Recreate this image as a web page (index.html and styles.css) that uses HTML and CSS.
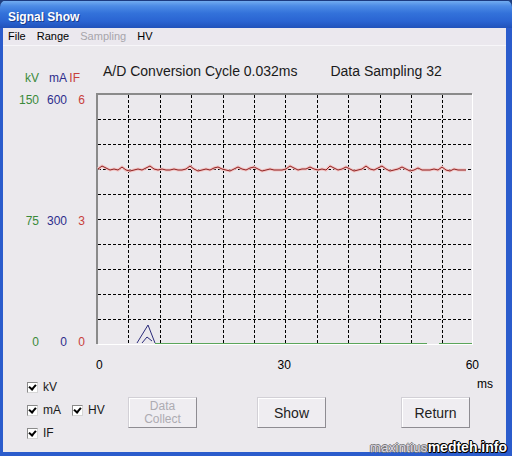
FILE: index.html
```html
<!DOCTYPE html>
<html lang="en">
<head>
  <meta charset="UTF-8" />
  <title>Signal Show</title>
  <link rel="stylesheet" href="styles.css">
</head>
<body>

  <div class="window">
    <div class="titlebar">Signal Show</div>

    <div class="frame">
      <div class="menubar">
        <span class="menu-item">File</span>
        <span class="menu-item">Range</span>
        <span class="menu-item disabled">Sampling</span>
        <span class="menu-item">HV</span>
      </div>

      <div class="client">
        <div class="legend">
          <span class="kv">kV</span>
          <span class="ma">mA</span>
          <span class="if if-head">IF</span>
        </div>

        <div class="info">
          <span>A/D Conversion Cycle 0.032ms</span>
          <span class="sampling">Data Sampling 32</span>
        </div>

        <div class="scale">
          <div class="scale-row"><span class="kv">150</span><span class="ma">600</span><span class="if">6</span></div>
          <div class="scale-row"><span class="kv">75</span><span class="ma">300</span><span class="if">3</span></div>
          <div class="scale-row"><span class="kv">0</span><span class="ma">0</span><span class="if">0</span></div>
        </div>

        <div class="chart">
          <svg width="377" height="252" viewBox="0 0 377 252">
            <g stroke="#000" stroke-width="1" stroke-dasharray="3 2" shape-rendering="crispEdges">
              <path d="M32.5 2V250 M64.5 2V250 M95.5 2V250 M127.5 2V250 M158.5 2V250 M189.5 2V250 M221.5 2V250 M252.5 2V250 M284.5 2V250 M315.5 2V250 M346.5 2V250" />
              <path d="M2 26.5H376 M2 51.5H376 M2 76.5H376 M2 101.5H376 M2 126.5H376 M2 151.5H376 M2 176.5H376 M2 201.5H376 M2 226.5H376" />
            </g>
            <!-- frame -->
            <path d="M1 251V1H376" fill="none" stroke="#8a8a8a" stroke-width="2" shape-rendering="crispEdges" />
            <path d="M376.5 1V251.5H2" fill="none" stroke="#fff" stroke-width="1" shape-rendering="crispEdges" />
            <!-- IF trace -->
            <polyline class="trace-glow" points="2,76 6,73 10,75 14,77 18,76 22,77 26,74 30,77 34,78 38,77 42,76 46,77 50,75 54,73 58,76 62,77 66,76 70,77 74,77 78,76 82,77 86,77 90,76 94,73 98,76 102,78 106,77 110,76 114,77 118,75 122,74 126,76 130,77 134,78 138,76 142,74 146,76 150,77 154,75 158,74 162,76 166,78 170,77 174,76 178,77 182,77 186,77 190,76 194,73 198,75 202,77 206,76 210,76 214,74 218,76 222,77 226,76 230,77 234,73 238,75 242,77 246,76 250,74 254,76 258,78 262,77 266,76 270,73 274,76 278,77 282,75 286,73 290,76 294,78 298,77 302,76 306,74 310,76 314,78 318,77 322,75 326,77 330,77 334,77 338,76 342,77 346,74 350,77 354,78 358,76 362,77 366,77 370,77" />
            <polyline class="trace-if" points="2,76 6,73 10,75 14,77 18,76 22,77 26,74 30,77 34,78 38,77 42,76 46,77 50,75 54,73 58,76 62,77 66,76 70,77 74,77 78,76 82,77 86,77 90,76 94,73 98,76 102,78 106,77 110,76 114,77 118,75 122,74 126,76 130,77 134,78 138,76 142,74 146,76 150,77 154,75 158,74 162,76 166,78 170,77 174,76 178,77 182,77 186,77 190,76 194,73 198,75 202,77 206,76 210,76 214,74 218,76 222,77 226,76 230,77 234,73 238,75 242,77 246,76 250,74 254,76 258,78 262,77 266,76 270,73 274,76 278,77 282,75 286,73 290,76 294,78 298,77 302,76 306,74 310,76 314,78 318,77 322,75 326,77 330,77 334,77 338,76 342,77 346,74 350,77 354,78 358,76 362,77 366,77 370,77" />
            <!-- mA spike -->
            <polyline class="trace-ma" points="41,250 52,232 59,250" />
            <polyline class="trace-ma" points="46,250 51,244 56,248" />
            <!-- kV baseline -->
            <path class="trace-kv" d="M59 250.5H331 M343 250.5H376" />
          </svg>
        </div>

        <div class="xaxis">
          <span>0</span>
          <span>30</span>
          <span>60</span>
        </div>

        <div class="controls">
          <div class="checks">
            <label class="check"><span class="box"></span>kV</label>
            <div class="check-line">
              <label class="check"><span class="box"></span>mA</label>
              <label class="check"><span class="box"></span>HV</label>
            </div>
            <label class="check"><span class="box"></span>IF</label>
          </div>
          <button class="btn btn-disabled" disabled>Data<br>Collect</button>
          <button class="btn btn-show">Show</button>
          <button class="btn btn-return">Return</button>
          <span class="unit">ms</span>
        </div>
      </div>
    </div>

    <div class="watermark"><span class="wm-name">maxintius</span><span class="wm-site">medteh.info</span></div>
  </div>

</body>
</html>
```

FILE: styles.css
```css
body {
  margin: 0;
  background: #1f3f80;
  font-family: 'Liberation Sans', Arial, sans-serif;
}

.window {
  position: relative;
  width: 512px;
  height: 456px;
  display: flex;
  flex-direction: column;
  border-radius: 7px 7px 0 0;
  overflow: hidden;
}

.titlebar {
  height: 28px;
  box-sizing: border-box;
  padding: 3px 0 0 8px;
  line-height: 26px;
  font-size: 12px;
  font-weight: bold;
  color: #fff;
  text-shadow: 1px 1px 0 #1a3c8c;
  background: linear-gradient(#72acf0 0%, #4d8ce6 18%, #3372da 45%, #2a64d2 75%, #2152ba 100%);
  border-top: 1px solid #1c3a80;
}

.frame {
  flex: 1;
  display: flex;
  flex-direction: column;
  border-left: 3px solid #2b5ccc;
  border-right: 6px solid #2b5ccc;
  border-bottom: 4px solid #2b5ccc;
  background: #ebe9ed;
}

.menubar {
  height: 17px;
  line-height: 17px;
  padding-left: 1px;
  font-size: 11px;
  color: #000;
  background: #ebe8ee;
  border-bottom: 1px solid #f7f6f9;
}

.menu-item {
  padding: 0 4px;
}

.menu-item.disabled {
  color: #a7a5ab;
}

.client {
  flex: 1;
  display: grid;
  grid-template-columns: 93px 377px 1fr;
  grid-template-rows: 47px 251px 28px 1fr;
  font-size: 12px;
  color: #000;
}

.kv { color: #3a8a3a; }
.ma { color: #2d2d8c; }
.if { color: #c8403c; }

.legend, .scale-row {
  display: grid;
  grid-template-columns: 36px 28px 18px;
  line-height: 14px;
  text-align: right;
}

.legend {
  grid-column: 1;
  grid-row: 1;
  padding-top: 25px;
  align-self: start;
}

.if-head {
  padding-right: 5px;
}

.info {
  grid-column: 2 / 4;
  grid-row: 1;
  padding: 17px 0 0 7px;
  font-size: 14px;
  line-height: 16px;
  color: #1a1a1a;
}

.sampling {
  margin-left: 29px;
}

.scale {
  grid-column: 1;
  grid-row: 2;
  height: 256px;
  display: flex;
  flex-direction: column;
  justify-content: space-between;
}

.chart {
  grid-column: 2;
  grid-row: 2;
}

.chart svg {
  display: block;
}

.trace-glow {
  fill: none;
  stroke: #f2c4c4;
  stroke-width: 3;
}

.trace-if {
  fill: none;
  stroke: #8e2020;
  stroke-width: 1;
}

.trace-ma {
  fill: none;
  stroke: #2a2a7a;
  stroke-width: 1;
}

.trace-kv {
  stroke: #5aa55a;
  stroke-width: 1;
  shape-rendering: crispEdges;
}

.xaxis {
  grid-column: 2 / 4;
  grid-row: 3;
  width: 383px;
  display: flex;
  justify-content: space-between;
  padding-top: 14px;
  line-height: 14px;
}

.controls {
  grid-column: 1 / 4;
  grid-row: 4;
  display: flex;
  align-items: flex-start;
}

.checks {
  width: 98px;
  box-sizing: border-box;
  padding: 10px 0 0 24px;
  display: flex;
  flex-direction: column;
  gap: 12px;
}

.check-line {
  display: flex;
  gap: 11px;
}

.check {
  display: flex;
  align-items: center;
  gap: 5px;
  height: 11px;
  line-height: 11px;
  color: #1a1a1a;
}

.box {
  position: relative;
  width: 9px;
  height: 9px;
  background: #fff;
  border: 1px solid;
  border-color: #8a8a8a #d6d6d6 #d6d6d6 #8a8a8a;
}

.box::after {
  content: "";
  position: absolute;
  left: 2px;
  top: 0;
  width: 3px;
  height: 5px;
  border: solid #000;
  border-width: 0 2px 2px 0;
  transform: rotate(40deg);
}

.btn {
  width: 69px;
  height: 31px;
  margin-top: 25px;
  padding: 0;
  font-family: 'Liberation Sans', Arial, sans-serif;
  font-size: 14px;
  color: #222;
  background: #efedf1;
  border: 1px solid;
  border-color: #d2d0d6 #8e8c92 #8e8c92 #d2d0d6;
  box-shadow: inset 1px 1px 0 #fff;
}

.btn-disabled {
  margin-left: 27px;
  font-size: 12px;
  line-height: 13px;
  color: #adabb1;
}

.btn-show {
  margin-left: 60px;
}

.btn-return {
  margin-left: 75px;
}

.unit {
  margin: 5px 0 0 7px;
  line-height: 14px;
}

.watermark {
  position: absolute;
  right: 5px;
  bottom: 1px;
  line-height: 15px;
}

.wm-name {
  font-size: 13px;
  letter-spacing: 0.3px;
  color: #dcd8e4;
  text-shadow: -1px 0 #777, 1px 0 #777, 0 -1px #777, 0 1px #777;
}

.wm-site {
  font-size: 14px;
  font-weight: bold;
  color: #fff;
  text-shadow: -1px 0 #000, 1px 0 #000, 0 -1px #000, 0 1px #000, 1px 1px #000, -1px -1px #000;
}
```
